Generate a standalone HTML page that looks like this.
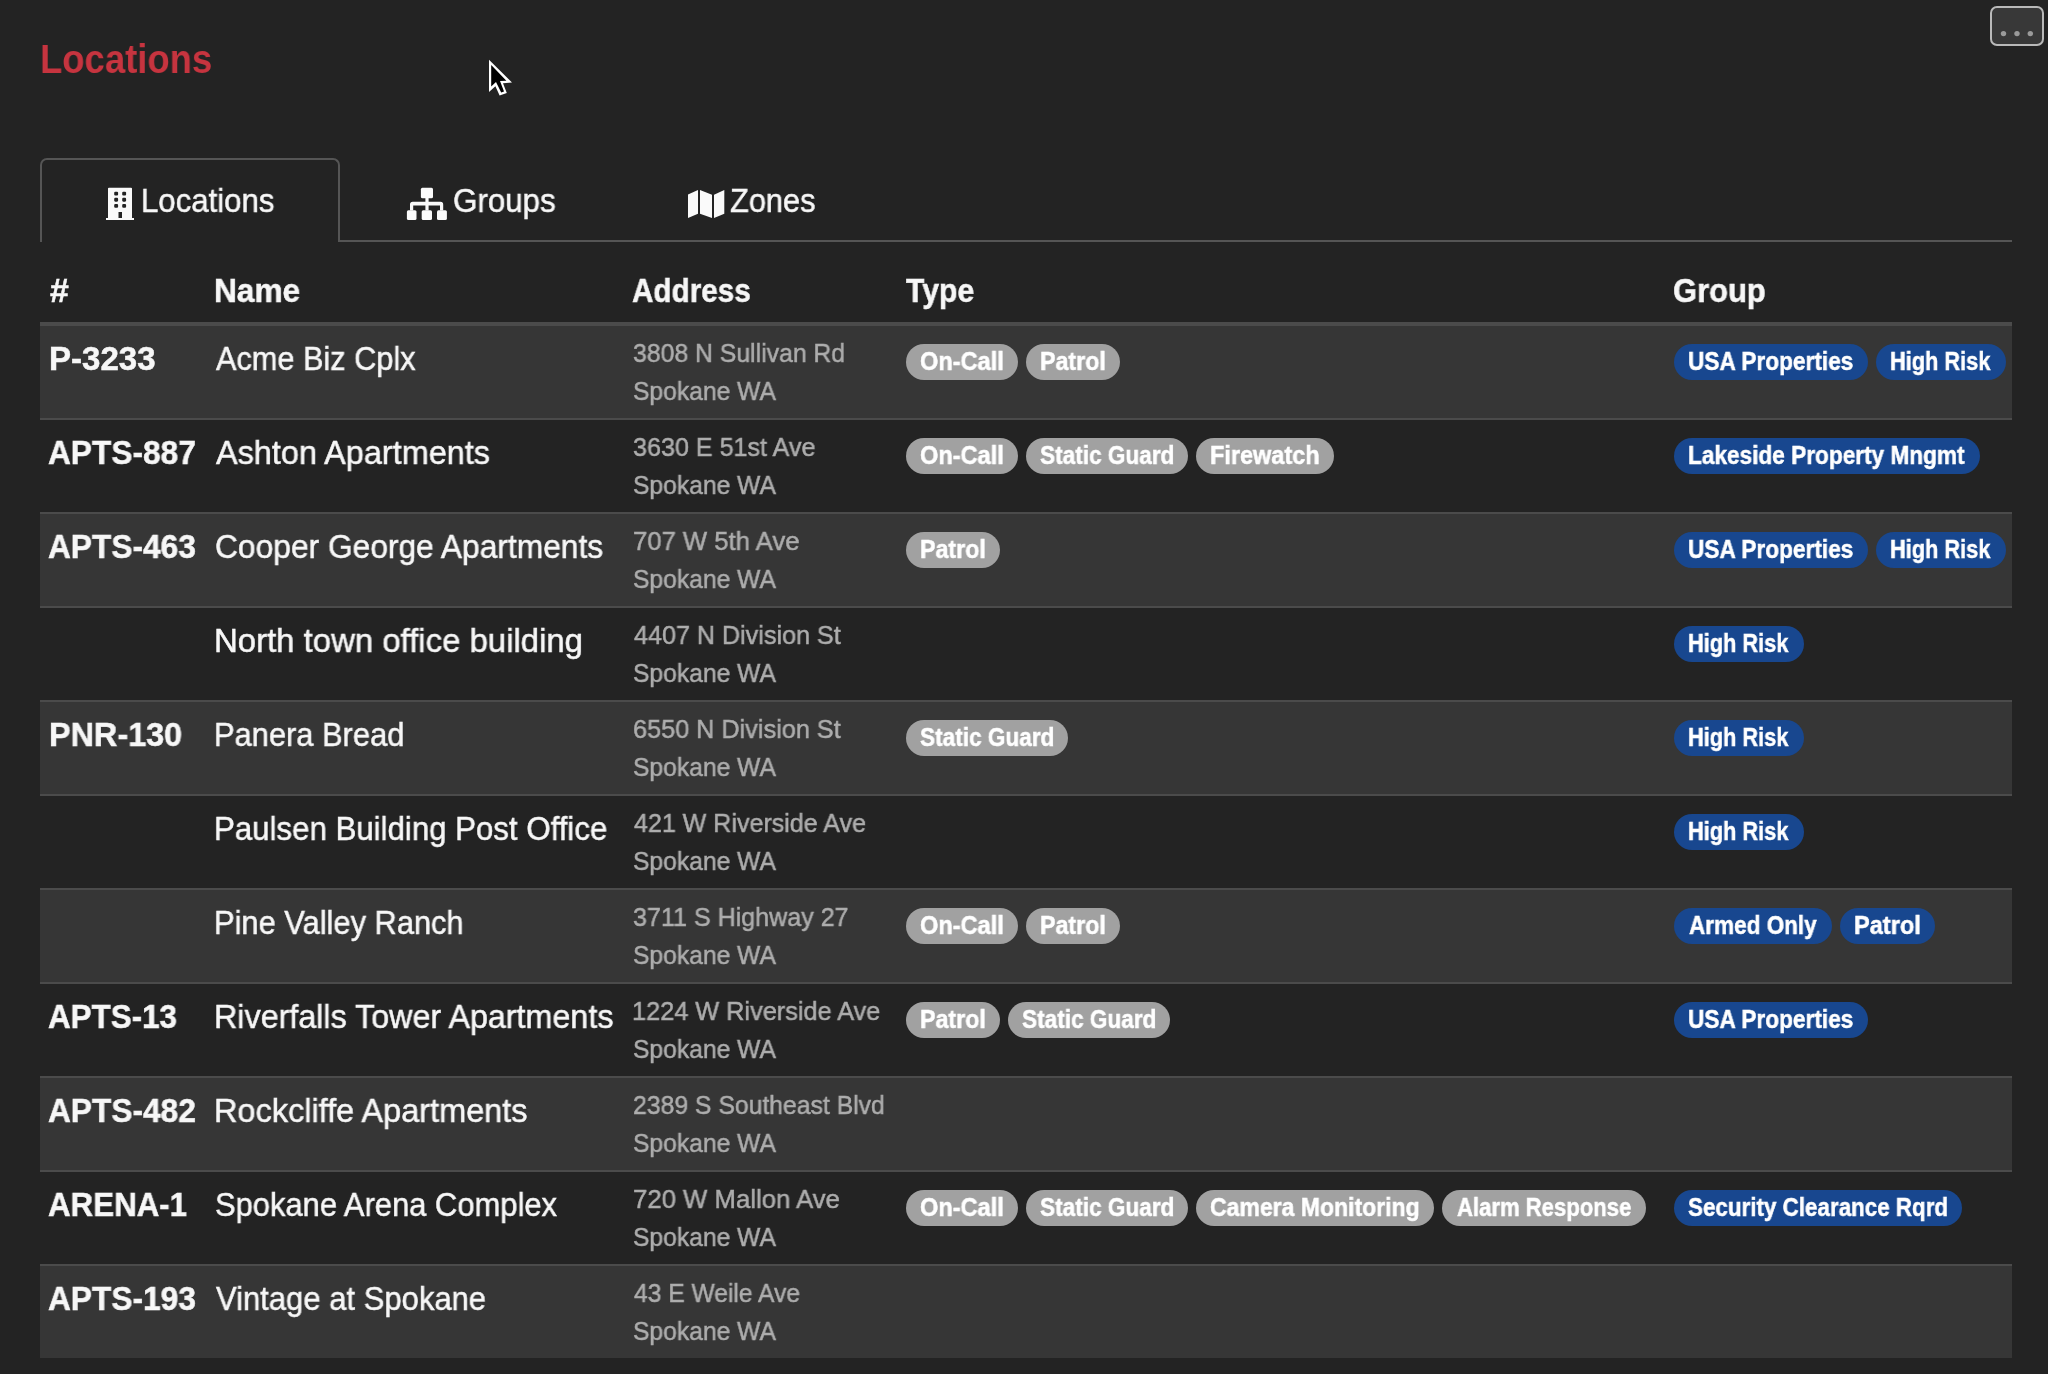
<!DOCTYPE html>
<html><head><meta charset="utf-8"><style>
html,body{margin:0;padding:0}
body{width:2048px;height:1374px;background:#232323;position:relative;overflow:hidden;font-family:"Liberation Sans",sans-serif}
.t{position:absolute;line-height:60px;height:60px;white-space:nowrap;transform-origin:0 0;will-change:transform;-webkit-text-stroke:0.5px currentColor}
</style></head><body>
<div style="position:absolute;left:40px;top:326px;width:1972px;height:92px;background:#363636"></div><div style="position:absolute;left:40px;top:418px;width:1972px;height:2px;background:#4b4b4b"></div><div style="position:absolute;left:40px;top:420px;width:1972px;height:92px;background:#232323"></div><div style="position:absolute;left:40px;top:512px;width:1972px;height:2px;background:#4b4b4b"></div><div style="position:absolute;left:40px;top:514px;width:1972px;height:92px;background:#363636"></div><div style="position:absolute;left:40px;top:606px;width:1972px;height:2px;background:#4b4b4b"></div><div style="position:absolute;left:40px;top:608px;width:1972px;height:92px;background:#232323"></div><div style="position:absolute;left:40px;top:700px;width:1972px;height:2px;background:#4b4b4b"></div><div style="position:absolute;left:40px;top:702px;width:1972px;height:92px;background:#363636"></div><div style="position:absolute;left:40px;top:794px;width:1972px;height:2px;background:#4b4b4b"></div><div style="position:absolute;left:40px;top:796px;width:1972px;height:92px;background:#232323"></div><div style="position:absolute;left:40px;top:888px;width:1972px;height:2px;background:#4b4b4b"></div><div style="position:absolute;left:40px;top:890px;width:1972px;height:92px;background:#363636"></div><div style="position:absolute;left:40px;top:982px;width:1972px;height:2px;background:#4b4b4b"></div><div style="position:absolute;left:40px;top:984px;width:1972px;height:92px;background:#232323"></div><div style="position:absolute;left:40px;top:1076px;width:1972px;height:2px;background:#4b4b4b"></div><div style="position:absolute;left:40px;top:1078px;width:1972px;height:92px;background:#363636"></div><div style="position:absolute;left:40px;top:1170px;width:1972px;height:2px;background:#4b4b4b"></div><div style="position:absolute;left:40px;top:1172px;width:1972px;height:92px;background:#232323"></div><div style="position:absolute;left:40px;top:1264px;width:1972px;height:2px;background:#4b4b4b"></div><div style="position:absolute;left:40px;top:1266px;width:1972px;height:92px;background:#363636"></div>

<div style="position:absolute;left:40px;top:158px;width:296px;height:82px;border:2px solid #555555;border-bottom:none;border-radius:7px 7px 0 0;box-sizing:content-box"></div>
<div style="position:absolute;left:338px;top:240px;width:1674px;height:2px;background:#555555"></div>
<div style="position:absolute;left:40px;top:322px;width:1972px;height:4px;background:#4b4b4b"></div>

<div style="position:absolute;left:906px;top:344px;width:112px;height:36px;border-radius:18px;background:#a1a1a1"></div><div style="position:absolute;left:1026px;top:344px;width:94px;height:36px;border-radius:18px;background:#a1a1a1"></div><div style="position:absolute;left:1674px;top:344px;width:194px;height:36px;border-radius:18px;background:#18478f"></div><div style="position:absolute;left:1876px;top:344px;width:130px;height:36px;border-radius:18px;background:#18478f"></div><div style="position:absolute;left:906px;top:438px;width:112px;height:36px;border-radius:18px;background:#a1a1a1"></div><div style="position:absolute;left:1026px;top:438px;width:162px;height:36px;border-radius:18px;background:#a1a1a1"></div><div style="position:absolute;left:1196px;top:438px;width:138px;height:36px;border-radius:18px;background:#a1a1a1"></div><div style="position:absolute;left:1674px;top:438px;width:306px;height:36px;border-radius:18px;background:#18478f"></div><div style="position:absolute;left:906px;top:532px;width:94px;height:36px;border-radius:18px;background:#a1a1a1"></div><div style="position:absolute;left:1674px;top:532px;width:194px;height:36px;border-radius:18px;background:#18478f"></div><div style="position:absolute;left:1876px;top:532px;width:130px;height:36px;border-radius:18px;background:#18478f"></div><div style="position:absolute;left:1674px;top:626px;width:130px;height:36px;border-radius:18px;background:#18478f"></div><div style="position:absolute;left:906px;top:720px;width:162px;height:36px;border-radius:18px;background:#a1a1a1"></div><div style="position:absolute;left:1674px;top:720px;width:130px;height:36px;border-radius:18px;background:#18478f"></div><div style="position:absolute;left:1674px;top:814px;width:130px;height:36px;border-radius:18px;background:#18478f"></div><div style="position:absolute;left:906px;top:908px;width:112px;height:36px;border-radius:18px;background:#a1a1a1"></div><div style="position:absolute;left:1026px;top:908px;width:94px;height:36px;border-radius:18px;background:#a1a1a1"></div><div style="position:absolute;left:1674px;top:908px;width:158px;height:36px;border-radius:18px;background:#18478f"></div><div style="position:absolute;left:1840px;top:908px;width:95px;height:36px;border-radius:18px;background:#18478f"></div><div style="position:absolute;left:906px;top:1002px;width:94px;height:36px;border-radius:18px;background:#a1a1a1"></div><div style="position:absolute;left:1008px;top:1002px;width:162px;height:36px;border-radius:18px;background:#a1a1a1"></div><div style="position:absolute;left:1674px;top:1002px;width:194px;height:36px;border-radius:18px;background:#18478f"></div><div style="position:absolute;left:906px;top:1190px;width:112px;height:36px;border-radius:18px;background:#a1a1a1"></div><div style="position:absolute;left:1026px;top:1190px;width:162px;height:36px;border-radius:18px;background:#a1a1a1"></div><div style="position:absolute;left:1196px;top:1190px;width:238px;height:36px;border-radius:18px;background:#a1a1a1"></div><div style="position:absolute;left:1442px;top:1190px;width:204px;height:36px;border-radius:18px;background:#a1a1a1"></div><div style="position:absolute;left:1674px;top:1190px;width:288px;height:36px;border-radius:18px;background:#18478f"></div>

<svg style="position:absolute;left:0;top:0" width="2048" height="400" viewBox="0 0 2048 400">
 <!-- building -->
 <g fill="#fafafa">
  <path d="M108 188.5 Q108 187.7 109 187.7 L131 187.7 Q132 187.7 132 188.5 L132 218 L134 218 L134 220 L106 220 L106 218 L108 218 Z M118.5 212 L118.5 218 L122 218 L122 212 Z" fill-rule="evenodd"/>
 </g>
 <g fill="#232323">
  <rect x="114.2" y="191.7" width="3.9" height="3.9" rx="1.1"/><rect x="122.2" y="191.7" width="3.9" height="3.9" rx="1.1"/>
  <rect x="114.2" y="197.8" width="3.9" height="3.9" rx="1.1"/><rect x="122.2" y="197.8" width="3.9" height="3.9" rx="1.1"/>
  <rect x="114.2" y="203.9" width="3.9" height="3.9" rx="1.1"/><rect x="122.2" y="203.9" width="3.9" height="3.9" rx="1.1"/>
 </g>
 <!-- sitemap -->
 <g fill="#fafafa">
  <rect x="420.9" y="187.7" width="12.1" height="10.6" rx="1.5"/>
  <rect x="425.4" y="197" width="3.2" height="6"/>
  <path d="M410 210.5 L410 204.5 Q410 201.8 412.7 201.8 L440.5 201.8 Q443.2 201.8 443.2 204.5 L443.2 210.5 L440 210.5 L440 205.4 L413.2 205.4 L413.2 210.5 Z"/>
  <rect x="425.4" y="204" width="3.2" height="6.5"/>
  <rect x="406.9" y="210.2" width="9.6" height="9.8" rx="1.5"/>
  <rect x="421.7" y="210.2" width="10.3" height="9.8" rx="1.5"/>
  <rect x="437" y="210.2" width="9.9" height="9.8" rx="1.5"/>
 </g>
 <!-- map -->
 <g fill="#fafafa">
  <path d="M688 194.6 L698 190 L698 213.7 L688 218.1 Z"/>
  <path d="M700 189.9 L712 194.8 L712 218.1 L700 213.7 Z"/>
  <path d="M714 194.8 L724.3 189.9 L724.3 213.7 L714 218.1 Z"/>
 </g>
</svg>


<div style="position:absolute;left:1990px;top:6px;width:50px;height:36px;border:2px solid #b9b9b9;border-radius:7px;background:#383838"></div>
<svg style="position:absolute;left:1990px;top:0" width="58" height="50" viewBox="1990 0 58 50"><g fill="#9a9a9a"><circle cx="2003.5" cy="33.6" r="2.7"/><circle cx="2017" cy="33.6" r="2.7"/><circle cx="2030.3" cy="33.6" r="2.7"/></g></svg>

<div class=t style="left:39.92px;top:29.29px;font-size:41px;font-weight:700;color:#c6343f;transform:scaleX(0.8895);-webkit-text-stroke:0">Locations</div><div class=t style="left:140.51px;top:170.57px;font-size:33px;font-weight:400;color:#f7f7f7;transform:scaleX(0.9446)">Locations</div><div class=t style="left:452.95px;top:170.57px;font-size:33px;font-weight:400;color:#f7f7f7;transform:scaleX(0.9486)">Groups</div><div class=t style="left:730.37px;top:170.57px;font-size:33px;font-weight:400;color:#f7f7f7;transform:scaleX(0.9322)">Zones</div><div class=t style="left:49.60px;top:260.57px;font-size:33px;font-weight:700;color:#f7f7f7;transform:scaleX(1.0222)">#</div><div class=t style="left:214.48px;top:260.57px;font-size:33px;font-weight:700;color:#f7f7f7;transform:scaleX(0.9586)">Name</div><div class=t style="left:632.30px;top:260.57px;font-size:33px;font-weight:700;color:#f7f7f7;transform:scaleX(0.8992)">Address</div><div class=t style="left:905.60px;top:260.57px;font-size:33px;font-weight:700;color:#f7f7f7;transform:scaleX(0.9149)">Type</div><div class=t style="left:1672.56px;top:260.57px;font-size:33px;font-weight:700;color:#f7f7f7;transform:scaleX(0.9371)">Group</div><div class=t style="left:48.70px;top:328.57px;font-size:33px;font-weight:700;color:#f7f7f7;transform:scaleX(1.0010)">P-3233</div><div class=t style="left:215.80px;top:328.57px;font-size:33px;font-weight:400;color:#f7f7f7;transform:scaleX(0.9304)">Acme Biz Cplx</div><div class=t style="left:633.45px;top:322.99px;font-size:26px;font-weight:400;color:#adadad;transform:scaleX(0.9532)">3808 N Sullivan Rd</div><div class=t style="left:633.45px;top:360.79px;font-size:26px;font-weight:400;color:#adadad;transform:scaleX(0.9480)">Spokane WA</div><div class=t style="left:919.56px;top:331.34px;font-size:25px;font-weight:700;color:#ffffff;transform:scaleX(0.9425)">On-Call</div><div class=t style="left:1039.57px;top:331.34px;font-size:25px;font-weight:700;color:#ffffff;transform:scaleX(0.9275)">Patrol</div><div class=t style="left:1687.59px;top:331.34px;font-size:25px;font-weight:700;color:#ffffff;transform:scaleX(0.9061)">USA Properties</div><div class=t style="left:1889.63px;top:331.34px;font-size:25px;font-weight:700;color:#ffffff;transform:scaleX(0.8696)">High Risk</div><div class=t style="left:48.14px;top:422.57px;font-size:33px;font-weight:700;color:#f7f7f7;transform:scaleX(0.9599)">APTS-887</div><div class=t style="left:215.80px;top:422.57px;font-size:33px;font-weight:400;color:#f7f7f7;transform:scaleX(0.9827)">Ashton Apartments</div><div class=t style="left:633.43px;top:416.99px;font-size:26px;font-weight:400;color:#adadad;transform:scaleX(0.9658)">3630 E 51st Ave</div><div class=t style="left:633.45px;top:454.79px;font-size:26px;font-weight:400;color:#adadad;transform:scaleX(0.9480)">Spokane WA</div><div class=t style="left:919.56px;top:425.34px;font-size:25px;font-weight:700;color:#ffffff;transform:scaleX(0.9425)">On-Call</div><div class=t style="left:1039.60px;top:425.34px;font-size:25px;font-weight:700;color:#ffffff;transform:scaleX(0.9041)">Static Guard</div><div class=t style="left:1209.56px;top:425.34px;font-size:25px;font-weight:700;color:#ffffff;transform:scaleX(0.9391)">Firewatch</div><div class=t style="left:1687.60px;top:425.34px;font-size:25px;font-weight:700;color:#ffffff;transform:scaleX(0.9049)">Lakeside Property Mngmt</div><div class=t style="left:48.14px;top:516.57px;font-size:33px;font-weight:700;color:#f7f7f7;transform:scaleX(0.9599)">APTS-463</div><div class=t style="left:214.84px;top:516.57px;font-size:33px;font-weight:400;color:#f7f7f7;transform:scaleX(0.9619)">Cooper George Apartments</div><div class=t style="left:633.41px;top:510.99px;font-size:26px;font-weight:400;color:#adadad;transform:scaleX(0.9874)">707 W 5th Ave</div><div class=t style="left:633.45px;top:548.79px;font-size:26px;font-weight:400;color:#adadad;transform:scaleX(0.9480)">Spokane WA</div><div class=t style="left:919.57px;top:519.34px;font-size:25px;font-weight:700;color:#ffffff;transform:scaleX(0.9275)">Patrol</div><div class=t style="left:1687.59px;top:519.34px;font-size:25px;font-weight:700;color:#ffffff;transform:scaleX(0.9061)">USA Properties</div><div class=t style="left:1889.63px;top:519.34px;font-size:25px;font-weight:700;color:#ffffff;transform:scaleX(0.8696)">High Risk</div><div class=t style="left:213.81px;top:610.57px;font-size:33px;font-weight:400;color:#f7f7f7;transform:scaleX(0.9973)">North town office building</div><div class=t style="left:634.40px;top:604.99px;font-size:26px;font-weight:400;color:#adadad;transform:scaleX(0.9664)">4407 N Division St</div><div class=t style="left:633.45px;top:642.79px;font-size:26px;font-weight:400;color:#adadad;transform:scaleX(0.9480)">Spokane WA</div><div class=t style="left:1687.63px;top:613.34px;font-size:25px;font-weight:700;color:#ffffff;transform:scaleX(0.8696)">High Risk</div><div class=t style="left:48.84px;top:704.57px;font-size:33px;font-weight:700;color:#f7f7f7;transform:scaleX(0.9812)">PNR-130</div><div class=t style="left:213.93px;top:704.57px;font-size:33px;font-weight:400;color:#f7f7f7;transform:scaleX(0.9350)">Panera Bread</div><div class=t style="left:633.43px;top:698.99px;font-size:26px;font-weight:400;color:#adadad;transform:scaleX(0.9709)">6550 N Division St</div><div class=t style="left:633.45px;top:736.79px;font-size:26px;font-weight:400;color:#adadad;transform:scaleX(0.9480)">Spokane WA</div><div class=t style="left:919.60px;top:707.34px;font-size:25px;font-weight:700;color:#ffffff;transform:scaleX(0.9041)">Static Guard</div><div class=t style="left:1687.63px;top:707.34px;font-size:25px;font-weight:700;color:#ffffff;transform:scaleX(0.8696)">High Risk</div><div class=t style="left:213.91px;top:798.57px;font-size:33px;font-weight:400;color:#f7f7f7;transform:scaleX(0.9458)">Paulsen Building Post Office</div><div class=t style="left:634.40px;top:792.99px;font-size:26px;font-weight:400;color:#adadad;transform:scaleX(0.9629)">421 W Riverside Ave</div><div class=t style="left:633.45px;top:830.79px;font-size:26px;font-weight:400;color:#adadad;transform:scaleX(0.9480)">Spokane WA</div><div class=t style="left:1687.63px;top:801.34px;font-size:25px;font-weight:700;color:#ffffff;transform:scaleX(0.8696)">High Risk</div><div class=t style="left:213.93px;top:892.57px;font-size:33px;font-weight:400;color:#f7f7f7;transform:scaleX(0.9342)">Pine Valley Ranch</div><div class=t style="left:633.44px;top:886.99px;font-size:26px;font-weight:400;color:#adadad;transform:scaleX(0.9640)">3711 S Highway 27</div><div class=t style="left:633.45px;top:924.79px;font-size:26px;font-weight:400;color:#adadad;transform:scaleX(0.9480)">Spokane WA</div><div class=t style="left:919.56px;top:895.34px;font-size:25px;font-weight:700;color:#ffffff;transform:scaleX(0.9425)">On-Call</div><div class=t style="left:1039.57px;top:895.34px;font-size:25px;font-weight:700;color:#ffffff;transform:scaleX(0.9275)">Patrol</div><div class=t style="left:1688.50px;top:895.34px;font-size:25px;font-weight:700;color:#ffffff;transform:scaleX(0.9014)">Armed Only</div><div class=t style="left:1853.56px;top:895.34px;font-size:25px;font-weight:700;color:#ffffff;transform:scaleX(0.9420)">Patrol</div><div class=t style="left:48.15px;top:986.57px;font-size:33px;font-weight:700;color:#f7f7f7;transform:scaleX(0.9507)">APTS-13</div><div class=t style="left:213.84px;top:986.57px;font-size:33px;font-weight:400;color:#f7f7f7;transform:scaleX(0.9781)">Riverfalls Tower Apartments</div><div class=t style="left:632.45px;top:980.99px;font-size:26px;font-weight:400;color:#adadad;transform:scaleX(0.9727)">1224 W Riverside Ave</div><div class=t style="left:633.45px;top:1018.79px;font-size:26px;font-weight:400;color:#adadad;transform:scaleX(0.9480)">Spokane WA</div><div class=t style="left:919.57px;top:989.34px;font-size:25px;font-weight:700;color:#ffffff;transform:scaleX(0.9275)">Patrol</div><div class=t style="left:1021.60px;top:989.34px;font-size:25px;font-weight:700;color:#ffffff;transform:scaleX(0.9041)">Static Guard</div><div class=t style="left:1687.59px;top:989.34px;font-size:25px;font-weight:700;color:#ffffff;transform:scaleX(0.9061)">USA Properties</div><div class=t style="left:48.14px;top:1080.57px;font-size:33px;font-weight:700;color:#f7f7f7;transform:scaleX(0.9599)">APTS-482</div><div class=t style="left:213.83px;top:1080.57px;font-size:33px;font-weight:400;color:#f7f7f7;transform:scaleX(0.9842)">Rockcliffe Apartments</div><div class=t style="left:633.45px;top:1074.99px;font-size:26px;font-weight:400;color:#adadad;transform:scaleX(0.9519)">2389 S Southeast Blvd</div><div class=t style="left:633.45px;top:1112.79px;font-size:26px;font-weight:400;color:#adadad;transform:scaleX(0.9480)">Spokane WA</div><div class=t style="left:48.15px;top:1174.57px;font-size:33px;font-weight:700;color:#f7f7f7;transform:scaleX(0.9483)">ARENA-1</div><div class=t style="left:214.86px;top:1174.57px;font-size:33px;font-weight:400;color:#f7f7f7;transform:scaleX(0.9368)">Spokane Arena Complex</div><div class=t style="left:633.41px;top:1168.99px;font-size:26px;font-weight:400;color:#adadad;transform:scaleX(0.9899)">720 W Mallon Ave</div><div class=t style="left:633.45px;top:1206.79px;font-size:26px;font-weight:400;color:#adadad;transform:scaleX(0.9480)">Spokane WA</div><div class=t style="left:919.56px;top:1177.34px;font-size:25px;font-weight:700;color:#ffffff;transform:scaleX(0.9425)">On-Call</div><div class=t style="left:1039.60px;top:1177.34px;font-size:25px;font-weight:700;color:#ffffff;transform:scaleX(0.9041)">Static Guard</div><div class=t style="left:1209.58px;top:1177.34px;font-size:25px;font-weight:700;color:#ffffff;transform:scaleX(0.9204)">Camera Monitoring</div><div class=t style="left:1456.50px;top:1177.34px;font-size:25px;font-weight:700;color:#ffffff;transform:scaleX(0.8832)">Alarm Response</div><div class=t style="left:1687.60px;top:1177.34px;font-size:25px;font-weight:700;color:#ffffff;transform:scaleX(0.8958)">Security Clearance Rqrd</div><div class=t style="left:48.14px;top:1268.57px;font-size:33px;font-weight:700;color:#f7f7f7;transform:scaleX(0.9599)">APTS-193</div><div class=t style="left:215.80px;top:1268.57px;font-size:33px;font-weight:400;color:#f7f7f7;transform:scaleX(0.9395)">Vintage at Spokane</div><div class=t style="left:634.40px;top:1262.99px;font-size:26px;font-weight:400;color:#adadad;transform:scaleX(0.9463)">43 E Weile Ave</div><div class=t style="left:633.45px;top:1300.79px;font-size:26px;font-weight:400;color:#adadad;transform:scaleX(0.9480)">Spokane WA</div>

<svg style="position:absolute;left:0;top:0" width="600" height="120" viewBox="0 0 600 120">
 <path d="M489 59.8 L512 82.6 L503 83.2 L506.8 93 L499.6 95.6 L495.4 86.2 L489 92 Z" fill="#fff"/>
 <path d="M491.2 65 L506.4 80.8 L500 81 L504 91.4 L501.2 92.4 L496 82 L491.2 86.6 Z" fill="#000"/>
</svg>

</body></html>
